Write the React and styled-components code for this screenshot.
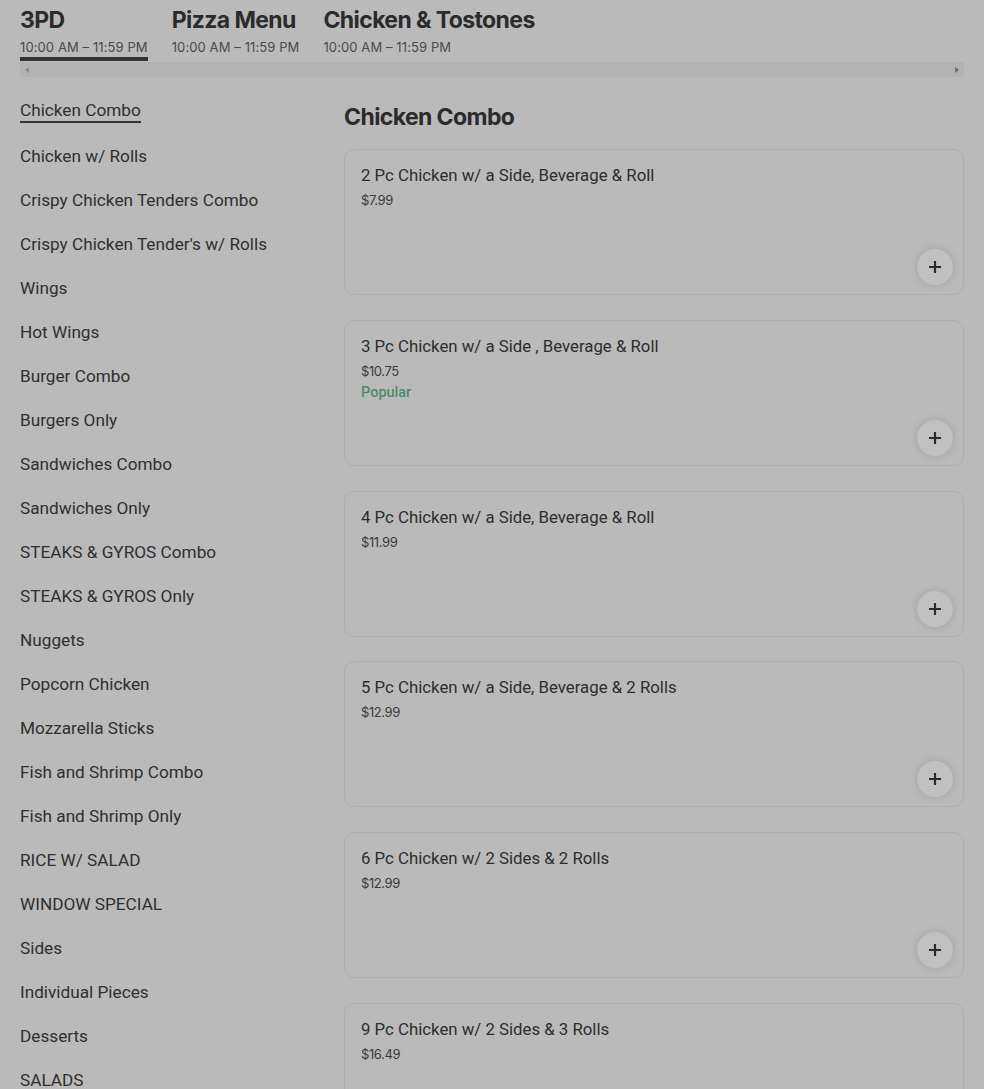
import styled, { createGlobalStyle } from "styled-components";

const GlobalStyle = createGlobalStyle`
  html, body {
    margin: 0;
    padding: 0;
    background: #bababa;
  }
  body {
    font-family: Roboto, "Liberation Sans", Arial, sans-serif;
    color: #2d2d2d;
  }
`;

const Page = styled.div`
  padding: 6px 20px 0 20px;
  height: 1083px;
  overflow: hidden;
`;

const TabStrip = styled.div`
  display: flex;
  gap: 24px;
`;

const Tab = styled.div`
  display: flex;
  flex-direction: column;
  border-bottom: 4px solid ${(p) => (p.active ? "#333333" : "transparent")};
  padding-bottom: 1px;
`;

const TabTitle = styled.div`
  font-family: Inter, "Liberation Sans", sans-serif;
  font-weight: 700;
  font-size: 23px;
  letter-spacing: -0.6px;
  line-height: 28px;
  color: #2b2b2b;
`;

const TabHours = styled.div`
  font-family: Inter, "Liberation Sans", sans-serif;
  font-size: 13px;
  letter-spacing: 0.1px;
  line-height: 18px;
  margin-top: 4px;
  color: #4a4a4a;
  white-space: nowrap;
`;

const ScrollTrack = styled.div`
  height: 15px;
  background: #b3b3b3;
  border-top: 1px solid #bdbdbd;
  display: flex;
  align-items: center;
  justify-content: space-between;
  padding: 0 5px;
`;

const Arrow = styled.span`
  width: 0;
  height: 0;
  border-top: 3px solid transparent;
  border-bottom: 3px solid transparent;
  ${(p) =>
    p.dir === "left"
      ? "border-right: 4px solid #8a8a8a;"
      : "border-left: 4px solid #6e6e6e;"}
`;

const Body = styled.div`
  display: grid;
  grid-template-columns: 324px 620px;
  margin-top: 11px;
`;

const Nav = styled.nav`
  display: flex;
  flex-direction: column;
`;

const NavItem = styled.div`
  font-size: 17.2px;
  line-height: 20px;
  padding: 12px 0 ${(p) => (p.active ? "14px" : "12px")} 0;
  color: #2f2f2f;
`;

const NavLabel = styled.span`
  border-bottom: ${(p) => (p.active ? "2px solid #333333" : "none")};
  padding-bottom: 1px;
`;

const Main = styled.main`
  display: flex;
  flex-direction: column;
`;

const Heading = styled.h2`
  font-family: Inter, "Liberation Sans", sans-serif;
  font-weight: 700;
  font-size: 23px;
  letter-spacing: -0.6px;
  line-height: 32px;
  margin: 13px 0 16px 0;
  color: #2b2b2b;
`;

const CardList = styled.div`
  display: flex;
  flex-direction: column;
  gap: 24.8px;
`;

const Card = styled.div`
  height: 146px;
  box-sizing: border-box;
  border: 1px solid #aeaeae;
  border-radius: 10px;
  padding: 15px 16px 0 16px;
  display: flex;
  flex-direction: column;
`;

const ItemTitle = styled.div`
  font-size: 16.8px;
  line-height: 20px;
  color: #2d2d2d;
`;

const Price = styled.div`
  font-family: Inter, "Liberation Sans", sans-serif;
  font-size: 13px;
  letter-spacing: -0.4px;
  line-height: 18px;
  margin-top: 6px;
  color: #3a3a3a;
`;

const Badge = styled.div`
  font-size: 14.5px;
  font-weight: 500;
  line-height: 20px;
  margin-top: 3px;
  color: #4f8a68;
`;

const AddButton = styled.button`
  margin: auto -6px 9px 0;
  align-self: flex-end;
  width: 36px;
  height: 36px;
  border-radius: 50%;
  border: none;
  background: #c0c0c0;
  box-shadow: 0 0 8px rgba(0, 0, 0, 0.14);
  display: flex;
  align-items: center;
  justify-content: center;
  padding: 0;
`;

const tabs = [
  { title: "3PD", active: true },
  { title: "Pizza Menu" },
  { title: "Chicken & Tostones" },
];

const categories = [
  "Chicken Combo",
  "Chicken w/ Rolls",
  "Crispy Chicken Tenders Combo",
  "Crispy Chicken Tender's w/ Rolls",
  "Wings",
  "Hot Wings",
  "Burger Combo",
  "Burgers Only",
  "Sandwiches Combo",
  "Sandwiches Only",
  "STEAKS & GYROS Combo",
  "STEAKS & GYROS Only",
  "Nuggets",
  "Popcorn Chicken",
  "Mozzarella Sticks",
  "Fish and Shrimp Combo",
  "Fish and Shrimp Only",
  "RICE W/ SALAD",
  "WINDOW SPECIAL",
  "Sides",
  "Individual Pieces",
  "Desserts",
  "SALADS",
];

const items = [
  { name: "2 Pc Chicken w/ a Side, Beverage & Roll", price: "$7.99" },
  { name: "3 Pc Chicken w/ a Side , Beverage & Roll", price: "$10.75", popular: true },
  { name: "4 Pc Chicken w/ a Side, Beverage & Roll", price: "$11.99" },
  { name: "5 Pc Chicken w/ a Side, Beverage & 2 Rolls", price: "$12.99" },
  { name: "6 Pc Chicken w/ 2 Sides & 2 Rolls", price: "$12.99" },
  { name: "9 Pc Chicken w/ 2 Sides & 3 Rolls", price: "$16.49" },
];

const PlusIcon = () => (
  <svg width="14" height="14" viewBox="0 0 14 14">
    <path d="M7 1v12M1 7h12" stroke="#2b2b2b" strokeWidth="2.2" />
  </svg>
);

export default function App() {
  return (
    <>
      <GlobalStyle />
      <Page>
        <TabStrip>
          {tabs.map((t) => (
            <Tab key={t.title} active={t.active}>
              <TabTitle>{t.title}</TabTitle>
              <TabHours>10:00 AM – 11:59 PM</TabHours>
            </Tab>
          ))}
        </TabStrip>
        <ScrollTrack>
          <Arrow dir="left" />
          <Arrow dir="right" />
        </ScrollTrack>
        <Body>
          <Nav>
            {categories.map((c, i) => (
              <NavItem key={c} active={i === 0}>
                <NavLabel active={i === 0}>{c}</NavLabel>
              </NavItem>
            ))}
          </Nav>
          <Main>
            <Heading>Chicken Combo</Heading>
            <CardList>
              {items.map((it) => (
                <Card key={it.name}>
                  <ItemTitle>{it.name}</ItemTitle>
                  <Price>{it.price}</Price>
                  {it.popular && <Badge>Popular</Badge>}
                  <AddButton aria-label="Add">
                    <PlusIcon />
                  </AddButton>
                </Card>
              ))}
            </CardList>
          </Main>
        </Body>
      </Page>
    </>
  );
}
